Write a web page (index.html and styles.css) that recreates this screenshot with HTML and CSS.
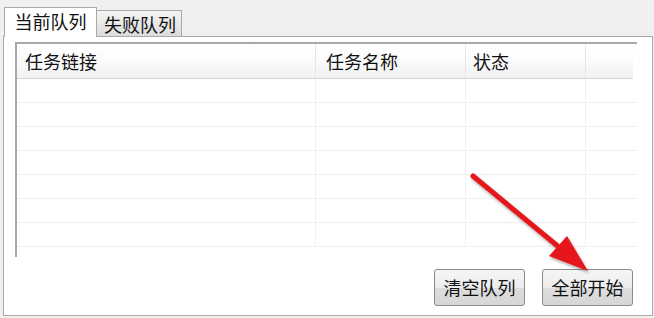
FILE: index.html
```html
<!DOCTYPE html>
<html lang="zh-CN">
<head>
<meta charset="utf-8">
<title>队列</title>
<link rel="stylesheet" href="styles.css">
</head>
<body>
<div class="window">
  <div class="tabs">
    <div class="tab active">当前队列</div>
    <div class="tab">失败队列</div>
  </div>
  <div class="panel">
    <div class="list">
      <div class="header">
        <div class="hcell c1">任务链接</div>
        <div class="hcell c2">任务名称</div>
        <div class="hcell c3">状态</div>
        <div class="hcell c4"></div>
      </div>
      <div class="rows">
        <div class="row"><div class="cell c1"></div><div class="cell c2"></div><div class="cell c3"></div><div class="cell c4"></div></div>
        <div class="row"><div class="cell c1"></div><div class="cell c2"></div><div class="cell c3"></div><div class="cell c4"></div></div>
        <div class="row"><div class="cell c1"></div><div class="cell c2"></div><div class="cell c3"></div><div class="cell c4"></div></div>
        <div class="row"><div class="cell c1"></div><div class="cell c2"></div><div class="cell c3"></div><div class="cell c4"></div></div>
        <div class="row"><div class="cell c1"></div><div class="cell c2"></div><div class="cell c3"></div><div class="cell c4"></div></div>
        <div class="row"><div class="cell c1"></div><div class="cell c2"></div><div class="cell c3"></div><div class="cell c4"></div></div>
        <div class="row"><div class="cell c1"></div><div class="cell c2"></div><div class="cell c3"></div><div class="cell c4"></div></div>
      </div>
    </div>
    <div class="actions">
      <button class="btn">清空队列</button>
      <button class="btn">全部开始</button>
    </div>
  </div>
</div>
<svg class="arrow" width="654" height="318" viewBox="0 0 654 318">
  <defs>
    <filter id="sh" x="-20%" y="-20%" width="140%" height="140%">
      <feDropShadow dx="1" dy="2" stdDeviation="1.5" flood-color="#000" flood-opacity="0.35"/>
    </filter>
  </defs>
  <g filter="url(#sh)">
    <line x1="473" y1="176" x2="560" y2="248" stroke="#e5161b" stroke-width="5" stroke-linecap="round"/>
    <polygon points="588,271 549,256 567,236" fill="#e5161b"/>
  </g>
</svg>
</body>
</html>
```
FILE: styles.css
```css
html, body {
  margin: 0;
  padding: 0;
}
body {
  width: 654px;
  height: 318px;
  overflow: hidden;
  background: #f0f0f0;
  font-family: "Noto Sans CJK SC", "Noto Sans", sans-serif;
  color: #111111;
  position: relative;
}
.window {
  padding-top: 7px;
}
.tabs {
  display: flex;
  align-items: flex-end;
  padding-left: 4px;
  height: 29px;
  position: relative;
  z-index: 2;
}
.tab {
  box-sizing: border-box;
  width: 85px;
  height: 26px;
  border: 1px solid #a9a9a9;
  border-bottom: none;
  border-left: none;
  background: linear-gradient(#f4f4f4, #dcdcdc);
  font-size: 18px;
  line-height: 26px;
  text-align: center;
  padding-left: 2px;
}
.tab.active {
  width: 93px;
  height: 30px;
  margin-bottom: -1px;
  border-left: 1px solid #a9a9a9;
  background: #ffffff;
  line-height: 26px;
  padding-left: 0;
  text-align: center;
}
.panel {
  box-sizing: border-box;
  margin-left: 3px;
  width: 650px;
  height: 280px;
  border: 1px solid #a9a9a9;
  background: #ffffff;
  padding: 5px 0 0 11px;
  display: flex;
  flex-direction: column;
}
.list {
  box-sizing: border-box;
  width: 622px;
  height: 215px;
  border-top: 2px solid #a8a8a8;
  border-left: 2px solid #a8a8a8;
  background: #fff;
}
.header {
  display: flex;
  height: 34px;
  border-bottom: 1px solid #d6d6d6;
  background: linear-gradient(#ffffff 0%, #fbfbfb 50%, #f1f1f1 100%);
  width: 616px;
}
.hcell {
  box-sizing: border-box;
  font-size: 18px;
  line-height: 34px;
  padding-left: 8px;
  border-right: 1px solid #e6e6e6;
}
.c1 { width: 299px; }
.c2 { width: 150px; padding-left: 10px; }
.c3 { width: 120px; padding-left: 7px; }
.c4 { width: 47px; border-right: none; }
.rows {
  width: 620px;
}
.row {
  display: flex;
  height: 24px;
  box-sizing: border-box;
  border-bottom: 1px solid #efefef;
}
.cell {
  box-sizing: border-box;
  height: 100%;
  border-right: 1px solid #f1f1f1;
}
.cell.c4 { border-right: none; flex: 1; }
.actions {
  display: flex;
  justify-content: flex-end;
  gap: 17px;
  margin-top: 12px;
  padding-right: 19px;
}
.btn {
  box-sizing: border-box;
  width: 91px;
  height: 37px;
  border: 1px solid #8a8a8a;
  border-radius: 3px;
  background: linear-gradient(#f6f6f6 0%, #ececec 50%, #dedede 51%, #d6d6d6 100%);
  font-family: "Noto Sans CJK SC", "Noto Sans", sans-serif;
  font-size: 18px;
  color: #111111;
  padding: 0;
  line-height: 35px;
}
.arrow {
  position: absolute;
  left: 0;
  top: 0;
  pointer-events: none;
  z-index: 5;
}
```
